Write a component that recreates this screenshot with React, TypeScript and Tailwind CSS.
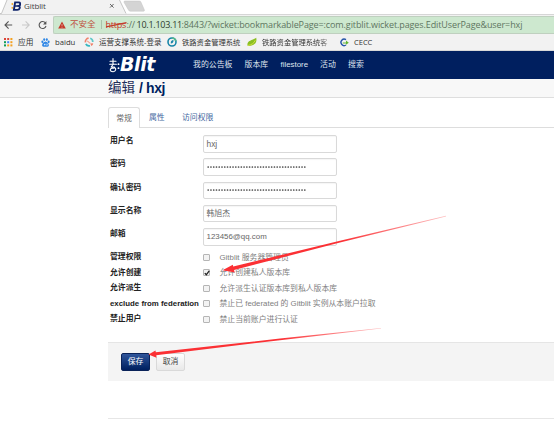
import type { ReactNode } from "react";

const uiFont = "font-['Open_Sans','Noto_Sans_CJK_SC',sans-serif]";
const pageFont = "font-['Liberation_Sans','Noto_Sans_CJK_SC',sans-serif]";

function GitblitIcon() {
  return (
    <svg className="h-[10px] w-[10px] shrink-0" viewBox="0 0 10 10">
      <circle cx="1.3" cy="3" r="0.9" fill="#f5a623" />
      <circle cx="1.3" cy="6.8" r="0.9" fill="#f5a623" />
      <path
        d="M4.1 1.4h3.4c2.4 0 2.1 2.9.4 3.6 1.6.8 1 3.9-1.6 3.9H2.9z"
        fill="none"
        stroke="#10246b"
        strokeWidth="1.9"
      />
      <path d="M3.5 5H8" stroke="#10246b" strokeWidth="1.5" />
    </svg>
  );
}

function TabStrip() {
  return (
    <div className="relative h-[14px] bg-white">
      <svg className="absolute left-0 top-0 h-[14px] w-[150px]" viewBox="0 0 150 14">
        <path d="M0 13.5H1.5L7 0H119.5L126 13.5H150V14H0z" fill="#f2f2f2" />
        <path d="M0 13.5H1.5L7 0M119.5 0L126 13.5" fill="none" stroke="#b9b9b9" strokeWidth="0.8" />
        <path
          d="M125 1h14.5q1 0 1.4 1l3.5 8q.3 1.2-1 1.2h-13q-1.3 0-1.8-1L124 2.3q-.3-1.3 1-1.3z"
          fill="#d4d4d4"
          stroke="#c3c3c3"
          strokeWidth="0.5"
        />
        <path d="M110 4l3.6 3.6M113.6 4L110 7.6" stroke="#555" strokeWidth="0.9" />
      </svg>
      <div className="relative flex h-[12px] items-center gap-[3px] pl-[11px] text-[8px] text-[#444]">
        <GitblitIcon />
        <span className="tracking-[-0.1px]">Gitblit</span>
      </div>
    </div>
  );
}

function Toolbar() {
  return (
    <div className="flex h-[20px] items-center border-t border-[#d6d6d6] bg-[#f2f2f2]">
      <svg className="h-[20px] w-[53px] shrink-0" viewBox="0 0 53 20" fill="none" strokeWidth="1.1">
        <path d="M12.2 10H5.2M8.6 6.4L5 10l3.6 3.6" stroke="#555" />
        <path d="M22 10h7M25.6 6.4L29.2 10l-3.6 3.6" stroke="#c8c8c8" />
        <path d="M45.4 7.9A3.5 3.5 0 1 0 46 11" stroke="#555" />
        <path d="M46.4 6v3.4H43z" fill="#555" />
      </svg>
      <div className="flex h-[18px] flex-1 items-center whitespace-nowrap rounded-l-[2px] border border-r-0 border-[#bfd0bf] bg-[#cde8cf] text-[9px] text-[#5e7561]">
        <svg className="ml-[4px] h-[8px] w-[8px] shrink-0" viewBox="0 0 8 8">
          <path d="M4 .6L7.8 7.5H.2z" fill="#c53929" />
          <path d="M4 3v2.2M4 5.8v.9" stroke="#e8c0ba" strokeWidth=".7" />
        </svg>
        <span className="ml-[4px] w-[31px] shrink-0 text-[8.5px] text-[#c0503f]">不安全</span>
        <span className="h-[9px] w-px shrink-0 bg-[#a9c3aa]" />
        <span className="relative ml-[3.5px] w-[21px] shrink-0 tracking-[-0.25px] text-[#c53929]">
          https
          <svg className="absolute left-0 top-[2px] h-[10px] w-[21px]" viewBox="0 0 21 10">
            <path d="M0 6.8L20.5 2.7" stroke="#c53929" strokeWidth="1.2" />
          </svg>
        </span>
        <span className="w-[10px] shrink-0 tracking-[-0.15px]">://</span>
        <span className="w-[45px] shrink-0 tracking-[-0.25px] text-[#2c3b2e]">10.1.103.11</span>
        <span className="tracking-[-0.1px]">
          :8443/?wicket:bookmarkablePage=:com.gitblit.wicket.pages.EditUserPage&amp;user=hxj
        </span>
      </div>
    </div>
  );
}

function AppsIcon() {
  const colors = ["#db4437", "#db4437", "#f4a020", "#0f9d58", "#4285f4", "#f4a020", "#0f9d58", "#f4a020", "#f4a020"];
  return (
    <svg className="h-[9px] w-[9px]" viewBox="0 0 9 9">
      {colors.map((color, i) => (
        <rect key={i} x={(i % 3) * 3.2} y={Math.floor(i / 3) * 3.2} width="2" height="2" fill={color} />
      ))}
    </svg>
  );
}

function PawIcon() {
  return (
    <svg className="h-[9px] w-[9px]" viewBox="0 0 9 9" fill="#2f86e5">
      <ellipse cx="1.4" cy="3.8" rx="1" ry="1.4" />
      <ellipse cx="3.2" cy="1.6" rx="1" ry="1.4" />
      <ellipse cx="5.8" cy="1.6" rx="1" ry="1.4" />
      <ellipse cx="7.6" cy="3.8" rx="1" ry="1.4" />
      <path d="M4.5 3.6c1.6 0 3.4 2.4 3.4 3.7 0 1.8-2 1.5-3.4 1.5s-3.4.3-3.4-1.5c0-1.3 1.8-3.7 3.4-3.7z" />
      <circle cx="3.7" cy="6.6" r=".8" fill="#d8eafc" />
      <path d="M5.2 5.6v1.6h1.3V5.6" fill="none" stroke="#d8eafc" strokeWidth=".5" />
    </svg>
  );
}

function SwirlIcon() {
  return (
    <svg className="h-[10px] w-[10px]" viewBox="0 0 10 10" fill="none" strokeWidth="1.7">
      <path d="M4.6 1.2A3.8 3.8 0 0 0 1.4 5.4" stroke="#f0806a" />
      <path d="M1.8 7A3.8 3.8 0 0 0 6 8.7" stroke="#38b6c0" />
      <path d="M6.2 1.3A3.8 3.8 0 0 1 8.8 5" stroke="#5ec8c8" />
      <path d="M8.5 6.4A3.8 3.8 0 0 1 7 8.3" stroke="#f0806a" />
      <path d="M3.2 3.8l3.4 2.8" stroke="#f6a08c" strokeWidth="1.1" />
    </svg>
  );
}

function RingIcon() {
  return (
    <svg className="h-[10px] w-[10px]" viewBox="0 0 10 10" fill="none">
      <circle cx="5" cy="5" r="4" stroke="#1785a8" strokeWidth="1.6" />
      <path d="M5 1a4 4 0 0 1 3.8 3" stroke="#55b98b" strokeWidth="1.6" />
      <path d="M3.8 6.4C3.5 4.3 4.6 3 6.5 3c.1 2.2-.7 3.3-2.7 3.4z" fill="#1785a8" />
    </svg>
  );
}

function LeafIcon() {
  return (
    <svg className="h-[10px] w-[10px]" viewBox="0 0 10 10">
      <path d="M.5 8.8C-.3 3.2 4.8 3.6 9.2.8 10.5 6 6.5 9.8.5 8.8z" fill="#8abf22" />
      <path d="M1 8.4C4.5 8 7 6.2 8.3 3.3" fill="none" stroke="#d2df42" strokeWidth="1" />
    </svg>
  );
}

function CeccIcon() {
  return (
    <svg className="h-[9px] w-[10px]" viewBox="0 0 10 9" fill="none">
      <path d="M7 1.7A3.2 3.2 0 1 0 7 7" stroke="#2455a8" strokeWidth="1.4" />
      <path d="M3.8 4.4H7V2.5l2.8 2.2L7 6.8V5.4H3.8z" fill="#62b532" />
    </svg>
  );
}

function Bookmark({ icon, className, children }: { icon: ReactNode; className: string; children: ReactNode }) {
  return (
    <div className={`flex shrink-0 items-center ${className}`}>
      {icon}
      <span className="shrink-0">{children}</span>
    </div>
  );
}

function BookmarksBar() {
  return (
    <div className="flex h-[17px] items-center whitespace-nowrap border-b border-[#d8d8d8] bg-[#f2f2f2] pl-[4px] text-[7.7px] leading-[12px] text-[#333]">
      <Bookmark icon={<AppsIcon />} className="w-[37px] gap-[5px]">应用</Bookmark>
      <Bookmark icon={<PawIcon />} className="w-[43px] gap-[5px]">baidu</Bookmark>
      <Bookmark icon={<SwirlIcon />} className="w-[83px] gap-[5px]"><span className="text-[7.5px]">运营支撑系统-登录</span></Bookmark>
      <Bookmark icon={<RingIcon />} className="w-[80px] gap-[5px]"><span className="text-[7.3px]">铁路资金管理系统</span></Bookmark>
      <Bookmark icon={<LeafIcon />} className="w-[92px] gap-[5px]">
        <span className="text-[7.3px] [mask-image:linear-gradient(to_right,black_56px,#0005_67px)]">铁路资金管理系统客</span>
      </Bookmark>
      <Bookmark icon={<CeccIcon />} className="gap-[5px]"><span className="text-[7.5px]">CECC</span></Bookmark>
    </div>
  );
}

function NavBar() {
  return (
    <nav className="flex h-[28px] items-center whitespace-nowrap bg-[#001f5f] pl-[108px] text-[7.9px] text-[#dfe4ee]">
      <div className="flex h-full w-[85px] items-center text-white">
        <svg className="h-[17px] w-[12px]" viewBox="0 0 12 17" fill="none" stroke="#fff" strokeWidth="1.1" strokeLinecap="round">
          <path d="M2 4.2h6M5 1.5v4.7M1.7 7.2h6.7" />
          <path d="M5.2 7.2L3.2 10M3.2 10h3.2M6.4 10.2c2.4 1.3 1.4 4.5-1.2 4.5-2.2 0-3.3-1-2.8-2.4.4-1.1 2-1.4 3.6-1" />
          <path d="M10.4 7.2h.2M10.4 11.2h.2" strokeWidth="1.7" />
        </svg>
        <span className="-mt-[1px] font-['DejaVu_Sans','Liberation_Sans',sans-serif] text-[19px] font-bold italic leading-none tracking-[-0.4px]">
          Blit
        </span>
      </div>
      <span className="w-[51.5px]">我的公告板</span>
      <span className="w-[36px]">版本库</span>
      <span className="w-[39.5px]">filestore</span>
      <span className="w-[28px]">活动</span>
      <span>搜索</span>
    </nav>
  );
}

function TextField({ label, children }: { label: string; children: ReactNode }) {
  return (
    <div className="flex h-[23.3px] items-start">
      <span className="w-[93px] pt-[1px] font-bold leading-[10px] text-[#222]">{label}</span>
      <div className="flex h-[17.5px] w-[134px] items-center rounded-[2px] border border-[#d9d9d9] bg-white pl-[2.5px] text-[#666] shadow-[inset_0_1px_1px_rgba(0,0,0,0.04)]">
        {children}
      </div>
    </div>
  );
}

function PasswordDots() {
  return (
    <svg className="h-[4px] w-[101px]" viewBox="0 0 101 4">
      {Array.from({ length: 36 }, (_, i) => (
        <circle key={i} cx={1.2 + i * 2.76} cy="2" r="0.85" fill="#444" />
      ))}
    </svg>
  );
}

function CheckRow({ label, checked, children }: { label: string; checked?: boolean; children: ReactNode }) {
  return (
    <div className="flex h-[15.5px] items-center whitespace-nowrap">
      <span className="w-[93px] font-bold text-[#222]">{label}</span>
      <span className="flex h-[7px] w-[7px] items-center justify-center rounded-[1px] border border-[#b5b5b5] bg-[#f3f3f3]">
        {checked && (
          <svg className="h-[6px] w-[6px] shrink-0" viewBox="0 0 6 6">
            <path d="M.8 3.1l1.5 1.7L5.2.8" fill="none" stroke="#222" strokeWidth="1.3" />
          </svg>
        )}
      </span>
      <span className="ml-[9.5px] pt-[1.5px] text-[#808080]">{children}</span>
    </div>
  );
}

function Arrows() {
  return (
    <svg className="pointer-events-none absolute left-0 top-0 h-[428px] w-[554px]" viewBox="0 0 554 428">
      <defs>
        <linearGradient id="upperFade" gradientUnits="userSpaceOnUse" x1="340" y1="240" x2="446" y2="216">
          <stop offset="0" stopColor="#fb3034" />
          <stop offset="1" stopColor="#fb3034" stopOpacity="0.3" />
        </linearGradient>
        <linearGradient id="lowerFade" gradientUnits="userSpaceOnUse" x1="280" y1="338" x2="381" y2="328">
          <stop offset="0" stopColor="#fb3034" />
          <stop offset="1" stopColor="#fb3034" stopOpacity="0.3" />
        </linearGradient>
      </defs>
      <path d="M222.5 270.3L232.8 264.8L233.2 266.6L340 240.8L446 215.7V216.4L340 242.6L234 269.9L234.8 272.6z" fill="url(#upperFade)" />
      <path d="M148.5 354.5L155.5 350.5L155.8 352.3L280 338.6L381 327.9V328.5L280 340.2L156.1 355.2L156.5 357.7z" fill="url(#lowerFade)" />
    </svg>
  );
}

export default function App() {
  return (
    <div className={`relative h-[428px] w-[554px] overflow-hidden bg-white ${pageFont}`}>
      <div className={uiFont}>
        <TabStrip />
        <Toolbar />
        <BookmarksBar />
      </div>
      <NavBar />
      <header className="flex h-[19px] items-center whitespace-nowrap border-b border-[#dedede] bg-[#f8f8f8] pl-[108px] text-[13.5px] leading-none text-[#1f2e5a]">
        <span>编辑</span>
        <span className="ml-[4px] text-[14px] font-bold tracking-[-0.4px] text-[#001f5f]">/ hxj</span>
      </header>
      <main className="ml-[108px] pt-[9px] text-[7.85px] leading-[12px]">
        <div className="flex h-[21px] items-center whitespace-nowrap border-b border-[#ddd] text-[#4468a0]">
          <span className="-mb-px flex h-[21px] w-[32px] items-center justify-center rounded-t-[3px] border border-b-0 border-[#ddd] bg-white pt-px text-[#666]">
            常规
          </span>
          <span className="ml-[9px] w-[33px] pt-[2px]">属性</span>
          <span className="pt-[2px]">访问权限</span>
        </div>
        <form className="pl-[2px] pt-[7px]">
          <TextField label="用户名"><span className="text-[8.4px]">hxj</span></TextField>
          <TextField label="密码"><PasswordDots /></TextField>
          <TextField label="确认密码"><PasswordDots /></TextField>
          <TextField label="显示名称">韩旭杰</TextField>
          <TextField label="邮箱"><span className="text-[7.9px]">123456@qq.com</span></TextField>
          <div className="-mt-[2px]">
            <CheckRow label="管理权限">Gitblit 服务器管理员</CheckRow>
            <CheckRow label="允许创建" checked>允许创建私人版本库</CheckRow>
            <CheckRow label="允许派生">允许派生认证版本库到私人版本库</CheckRow>
            <CheckRow label="exclude from federation">禁止已 federated 的 Gitblit 实例从本账户拉取</CheckRow>
            <CheckRow label="禁止用户">禁止当前账户进行认证</CheckRow>
          </div>
        </form>
        <div className="mt-[15.5px] flex h-[39px] items-center gap-[6px] border-t border-[#e5e5e5] bg-[#f4f4f4] pl-[13px]">
          <button className="h-[18px] w-[29px] rounded-[2px] border border-[#0a2359] bg-linear-to-b from-[#2f559b] to-[#001f5f] text-white">
            保存
          </button>
          <button className="h-[18px] w-[29px] rounded-[2px] border border-[#d9d9d9] bg-linear-to-b from-white to-[#e8e8e8] text-[#444]">
            取消
          </button>
        </div>
        <hr className="mt-[37px] border-[#e6e6e6]" />
      </main>
      <Arrows />
    </div>
  );
}
